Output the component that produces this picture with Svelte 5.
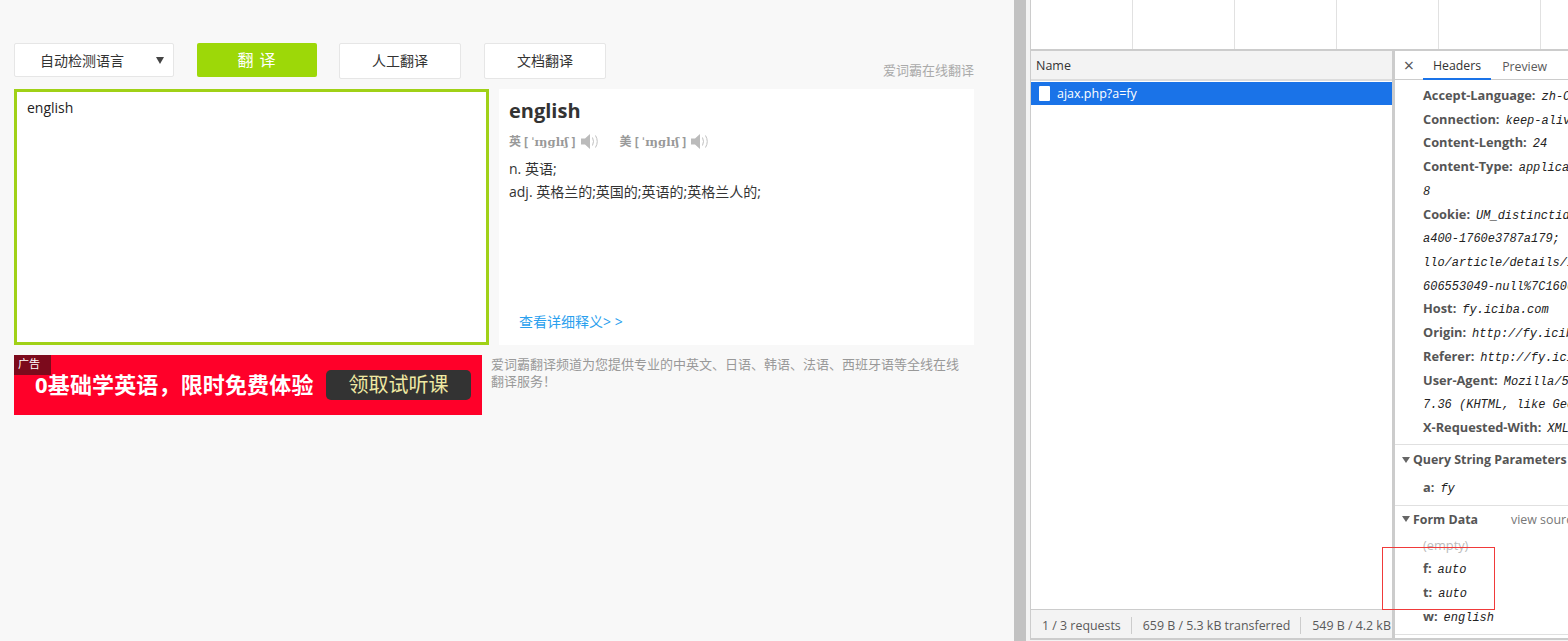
<script>
  const headers = [
    ['Accept-Language:', 'zh-CN,zh;q=0.9'],
    ['Connection:', 'keep-alive'],
    ['Content-Length:', '24'],
    ['Content-Type:', 'application/x-www-form-urlencoded; charset=UTF-'],
    ['', '8'],
    ['Cookie:', 'UM_distinctid=1760e3787a; CNZZDATA=1760e'],
    ['', 'a400-1760e3787a179;'],
    ['', 'llo/article/details/109555; Hm_lvt=1'],
    ['', '606553049-null%7C160655304'],
    ['Host:', 'fy.iciba.com'],
    ['Origin:', 'http://fy.iciba.com'],
    ['Referer:', 'http://fy.iciba.com/'],
    ['User-Agent:', 'Mozilla/5.0 (Windows NT 10.0)'],
    ['', '7.36 (KHTML, like Gecko)'],
    ['X-Requested-With:', 'XMLHttpRequest']
  ];
  const gridCols = [0, 1, 2, 3, 4, 5];
</script>

<div class="page">
  <main class="site">
    <div class="toolbar">
      <div class="select"><span>自动检测语言</span><i class="caret"></i></div>
      <div class="go">翻 译</div>
      <div class="btn b1">人工翻译</div>
      <div class="btn b2">文档翻译</div>
      <div class="slogan">爱词霸在线翻译</div>
    </div>
    <div class="panes">
      <div class="input">english</div>
      <div class="result">
        <h1>english</h1>
        <div class="phon">
          <span class="ph">英 [ <b>ˈɪŋɡlɪʃ</b> ]</span>
          <svg width="19" height="17" viewBox="0 0 19 17"><path d="M0 5.500h4L9 1v15L4 11.500H0z" fill="#bbb"/><path d="M11.500 4.500q2 4 0 8M14.500 2.500q3.500 6 0 12" fill="none" stroke="#c0c0c0"/></svg>
          <span class="ph us">美 [ <b>ˈɪŋɡlɪʃ</b> ]</span>
          <svg width="19" height="17" viewBox="0 0 19 17"><path d="M0 5.500h4L9 1v15L4 11.500H0z" fill="#bbb"/><path d="M11.500 4.500q2 4 0 8M14.500 2.500q3.500 6 0 12" fill="none" stroke="#c0c0c0"/></svg>
        </div>
        <p>n. 英语;</p>
        <p>adj. 英格兰的;英国的;英语的;英格兰人的;</p>
        <a class="more" href="#more">查看详细释义&gt; &gt;</a>
      </div>
    </div>
    <div class="lower">
      <div class="ad">
        <span class="tag">广告</span>
        <span class="ad-title">0基础学英语，限时免费体验</span>
        <span class="ad-btn">领取试听课</span>
      </div>
      <p class="desc">爱词霸翻译频道为您提供专业的中英文、日语、韩语、法语、西班牙语等全线在线翻译服务！</p>
    </div>
  </main>

  <div class="split"></div>

  <section class="devtools">
    <div class="overview">
      {#each gridCols as c}<div class="gridcol" class:first={c === 0}></div>{/each}
    </div>
    <div class="net">
      <div class="list">
        <div class="list-head">Name</div>
        <div class="row-sel"><i class="file"></i>ajax.php?a=fy</div>
        <div class="list-body"></div>
        <div class="status">
          <span>1 / 3 requests</span>
          <span>659 B / 5.3 kB transferred</span>
          <span>549 B / 4.2 kB</span>
        </div>
      </div>
      <div class="detail">
        <div class="tabs">
          <span class="x">×</span>
          <span class="tab active">Headers</span>
          <span class="tab">Preview</span>
        </div>
        <div class="kvs hdrs">
          {#each headers as [k, v]}
            <div class="kv">{#if k}<b>{k}</b>{/if}<em>{v}</em></div>
          {/each}
        </div>
        <div class="sec q">
          <div class="sec-h"><i class="tri"></i>Query String Parameters</div>
          <div class="kv"><b>a:</b><em>fy</em></div>
        </div>
        <div class="sec f">
          <div class="sec-h"><i class="tri"></i>Form Data<span class="vs">view source</span></div>
          <div class="kv empty">(empty)</div>
          <div class="kv"><b>f:</b><em>auto</em></div>
          <div class="kv"><b>t:</b><em>auto</em></div>
          <div class="kv"><b>w:</b><em>english</em></div>
        </div>
      </div>
    </div>
    <div class="redbox"></div>
  </section>
</div>

<style>
  :global(body) { margin: 0; }
  .page {
    position: relative;
    display: flex;
    width: 1568px;
    height: 641px;
    overflow: hidden;
    font-family: "Open Sans", "Noto Sans CJK SC", sans-serif;
    background: #f8f8f8;
  }
  .site { width: 1014px; flex: none; padding: 43px 40px 0 14px; box-sizing: border-box; }
  .toolbar { display: flex; align-items: flex-start; height: 46px; }
  .select {
    width: 160px; height: 34px; box-sizing: border-box;
    background: #fff; border: 1px solid #e6e6e6; border-radius: 2px;
    display: flex; align-items: center; padding-left: 25px;
    font-size: 14px; color: #333; position: relative;
  }
  .caret {
    position: absolute; right: 9px; top: 13px;
    border: 4.5px solid transparent; border-top: 7px solid #444; border-bottom: 0;
  }
  .go {
    width: 120px; height: 34px; margin-left: 23px;
    background: #9dd808; border-radius: 2px; color: #fff;
    font-size: 16px; line-height: 34px; text-align: center; letter-spacing: 1px;
  }
  .btn {
    width: 122px; height: 36px; box-sizing: border-box;
    background: #fff; border: 1px solid #e6e6e6; border-radius: 2px;
    font-size: 14px; line-height: 34px; text-align: center; color: #333;
  }
  .b1 { margin-left: 22px; }
  .b2 { margin-left: 23px; }
  .slogan { margin-left: auto; margin-top: 17px; font-size: 13px; line-height: 20px; color: #aaa; }
  .panes { display: flex; height: 256px; }
  .input {
    width: 475px; box-sizing: border-box; border: 3px solid #a0d117;
    background: #fff; padding: 6px 10px; font-size: 14px; line-height: 20px; color: #222;
  }
  .result { width: 475px; margin-left: 10px; background: #fff; padding: 8px 10px; box-sizing: border-box; position: relative; }
  .result h1 { margin: 0; font-size: 20px; line-height: 28px; font-weight: 700; color: #333; }
  .phon { display: flex; align-items: center; height: 22px; margin-top: 5px; margin-bottom: 5px; font-size: 12px; color: #999; }
  .ph { font-weight: 700; margin-right: 5px; white-space: pre; }
  .ph b { font-family: "DejaVu Serif", serif; font-size: 11.500px; letter-spacing: 0.1px; }
  .us { margin-left: 20px; }
  .result p { margin: 0; font-size: 14px; line-height: 23px; color: #333; }
  .more { position: absolute; left: 20px; top: 222px; font-size: 14px; line-height: 22px; color: #2aa0ee; text-decoration: none; }
  .lower { display: flex; margin-top: 10px; }
  .ad {
    position: relative; width: 468px; height: 60px; flex: none;
    background: #ff0029; display: flex; align-items: center; padding-left: 21px; box-sizing: border-box;
  }
  .tag { position: absolute; left: 0; top: 0; width: 37px; height: 20px; background: #7c0a1c; color: #fff; font-size: 11px; line-height: 18px; padding-left: 4px; box-sizing: border-box; }
  .ad-title { font-size: 22px; font-weight: 700; color: #fff; line-height: 28px; padding-bottom: 2px; width: 291px; white-space: nowrap; letter-spacing: 0.15px; }
  .ad-btn { width: 145px; height: 30px; background: #333; border-radius: 5px; color: #efe9a3; font-size: 20px; line-height: 29px; text-align: center; }
  .desc { margin: 1px 0 0 9px; width: 475px; font-size: 13px; line-height: 17px; color: #999; }

  .split { width: 12px; flex: none; background: #c2c2c2; }
  .devtools { flex: 1; min-width: 0; display: flex; flex-direction: column; background: #f3f3f3; padding-left: 4px; }
  .overview { height: 49px; display: flex; background: #fff; border-left: 1px solid #ccc; flex: none; }
  .gridcol { width: 101px; border-right: 1px solid #e1e1e1; flex: none; }
  .first { width: 101px; }
  .net { flex: none; height: 587px; display: flex; border-top: 2px solid #ccc; border-bottom: 2px solid #ccc; border-left: 1px solid #ccc; background: #fff; }
  .list { width: 361px; flex: none; display: flex; flex-direction: column; border-right: 3px solid #ccc; }
  .list-head { height: 28px; flex: none; background: #f3f3f3; border-bottom: 2px solid #ddd; font-size: 12.500px; line-height: 30px; padding-left: 5px; color: #333; }
  .row-sel { height: 23px; flex: none; margin-top: 1px; background: #1a73e8; color: #fff; font-size: 12.500px; line-height: 23px; display: flex; align-items: center; }
  .file { width: 11px; height: 15px; margin: 0 7px 0 8px; background: #fff; border-radius: 1px; }
  .list-body { flex: 1; }
  .status { height: 29px; box-sizing: border-box; padding-top: 3px; flex: none; background: #f3f3f3; border-top: 1px solid #ccc; font-size: 12.400px; color: #5a5a5a; display: flex; align-items: center; padding-left: 11px; white-space: nowrap; overflow: hidden; }
  .status span { line-height: 17px; }
  .status span + span { margin-left: 10px; padding-left: 11px; border-left: 1px solid #ccc; }
  .detail { flex: 1; min-width: 0; overflow: hidden; }
  .tabs { height: 28px; display: flex; align-items: center; border-bottom: 1px solid #ccc; font-size: 12.300px; color: #5a5a5a; background: #fff; }
  .x { width: 28px; text-align: center; font-size: 18px; color: #555; }
  .tab { padding: 0 10px; line-height: 30px; height: 26px; margin-right: 1px; }
  .active { border-bottom: 2px solid #1a73e8; color: #333; height: 27px; margin-top: 1px; }
  .kvs { padding: 3px 0 5.200px; }
  .kvs .kv { height: 23.720px; }
  .kv { height: 24px; line-height: 24px; padding-left: 28px; font-size: 12.800px; white-space: nowrap; color: #303030; }
  .kv b { font-weight: 700; color: #555; margin-right: 6px; }
  .kv em { font-family: "Liberation Mono", monospace; font-size: 12px; font-style: italic; color: #222; }
  .empty { color: #bbb; height: 23px; line-height: 24px; }
  .sec { border-top: 1px solid #e0e0e0; }
  .sec-h { font-size: 12.400px; font-weight: 700; color: #555; white-space: nowrap; display: flex; align-items: center; padding-left: 7px; height: 30px; }
  .q { padding-bottom: 6px; }
  .f { border-bottom: 1px solid #e0e0e0; padding-bottom: 6px; }
  .f .sec-h { height: 27px; }
  .tri { border: 4px solid transparent; border-top: 6px solid #666; border-bottom: 0; margin-right: 3px; }
  .vs { font-weight: 400; margin-left: 33px; color: #777; }
  .redbox { position: absolute; left: 1382px; top: 547px; width: 111px; height: 61px; border: 1px solid #f03a3a; }
</style>
